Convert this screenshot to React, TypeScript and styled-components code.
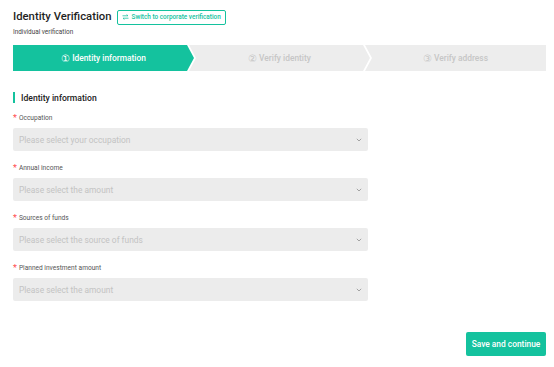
import React from "react";
import styled, { createGlobalStyle } from "styled-components";

const GREEN = "#14c29e";

const GlobalStyle = createGlobalStyle`
  html, body {
    margin: 0;
    padding: 0;
    background: #fff;
    font-family: Roboto, "Noto Sans", Arial, sans-serif;
  }
`;

const Page = styled.div`
  width: 554px;
  height: 367px;
  box-sizing: border-box;
  padding: 9px 8px 0 13px;
  display: flex;
  flex-direction: column;
`;

const TitleRow = styled.div`
  display: flex;
  align-items: center;
  gap: 5px;
  height: 16px;
`;

const Title = styled.h1`
  margin: 0;
  font-size: 11.3px;
  font-weight: 500;
  color: #1f1f1f;
  line-height: 16px;
`;

const SwitchButton = styled.button`
  display: flex;
  align-items: center;
  gap: 3px;
  height: 15px;
  padding: 0 4px;
  border: 1px solid ${GREEN};
  border-radius: 2px;
  background: #fff;
  color: ${GREEN};
  font-family: inherit;
  font-size: 6.4px;
  font-weight: 500;
  white-space: nowrap;
  cursor: pointer;
`;

const Subtitle = styled.div`
  margin-top: 3px;
  font-size: 6.4px;
  color: #444;
  line-height: 9px;
`;

const Stepper = styled.div`
  display: flex;
  height: 26px;
  margin-top: 8px;
`;

const Step = styled.div<{ $active?: boolean; $pos: "first" | "mid" | "last" }>`
  flex: 1;
  display: flex;
  align-items: center;
  justify-content: center;
  margin-left: ${(p) => (p.$pos === "first" ? "0" : "-5px")};
  background: ${(p) => (p.$active ? GREEN : "#ededed")};
  color: ${(p) => (p.$active ? "#fff" : "#c6c6c6")};
  font-size: 8.4px;
  font-weight: 500;
  white-space: nowrap;
  clip-path: ${(p) =>
    p.$pos === "first"
      ? "polygon(0 0, calc(100% - 7px) 0, 100% 50%, calc(100% - 7px) 100%, 0 100%)"
      : p.$pos === "mid"
      ? "polygon(0 0, calc(100% - 7px) 0, 100% 50%, calc(100% - 7px) 100%, 0 100%, 7px 50%)"
      : "polygon(0 0, 100% 0, 100% 100%, 0 100%, 7px 50%)"};
`;

const StepNum = styled.span`
  font-size: 9.5px;
  margin-right: 2px;
`;

const Section = styled.div`
  margin-top: 21px;
  display: flex;
  align-items: center;
  gap: 6px;
  height: 11px;
`;

const SectionBar = styled.span`
  width: 2px;
  height: 11px;
  background: ${GREEN};
`;

const SectionTitle = styled.span`
  font-size: 8.6px;
  font-weight: 500;
  color: #222;
`;

const Form = styled.div`
  margin-top: 9px;
  display: flex;
  flex-direction: column;
  width: 355px;
`;

const Field = styled.div`
  display: flex;
  flex-direction: column;
  margin-bottom: 11px;
`;

const Label = styled.label`
  display: flex;
  align-items: center;
  gap: 2px;
  height: 11px;
  font-size: 6.6px;
  color: #555;
  margin-bottom: 5px;
`;

const Star = styled.span`
  color: #ff4d4f;
  font-size: 9px;
  line-height: 1;
  margin-top: 2px;
`;

const SelectBox = styled.div`
  height: 23px;
  border-radius: 2px;
  background: #ececec;
  display: flex;
  align-items: center;
  justify-content: space-between;
  padding: 0 6px;
  font-size: 8.4px;
  color: #c3c3c3;
`;

const Footer = styled.div`
  display: flex;
  justify-content: flex-end;
  margin-top: 20px;
`;

const SaveButton = styled.button`
  width: 80px;
  height: 24px;
  padding: 0;
  border: none;
  border-radius: 2px;
  background: ${GREEN};
  color: #fff;
  font-family: inherit;
  font-size: 8.4px;
  font-weight: 500;
  white-space: nowrap;
  cursor: pointer;
`;

const Chevron = () => (
  <svg width="6" height="4" viewBox="0 0 6 4" fill="none">
    <path d="M0.8 0.8 L3 3 L5.2 0.8" stroke="#9a9a9a" strokeWidth="0.9" />
  </svg>
);

const SwapIcon = () => (
  <svg width="7" height="6" viewBox="0 0 7 6" fill="none" stroke={GREEN} strokeWidth="0.8">
    <path d="M0.5 1.8 H6 L4.6 0.5" />
    <path d="M6.5 4.2 H1 L2.4 5.5" />
  </svg>
);

const FIELDS = [
  { label: "Occupation", placeholder: "Please select your occupation" },
  { label: "Annual income", placeholder: "Please select the amount" },
  { label: "Sources of funds", placeholder: "Please select the source of funds" },
  { label: "Planned investment amount", placeholder: "Please select the amount" },
];

const STEPS: { n: string; text: string; pos: "first" | "mid" | "last" }[] = [
  { n: "①", text: "Identity information", pos: "first" },
  { n: "②", text: "Verify identity", pos: "mid" },
  { n: "③", text: "Verify address", pos: "last" },
];

export default function App() {
  return (
    <>
      <GlobalStyle />
      <Page>
        <TitleRow>
          <Title>Identity Verification</Title>
          <SwitchButton>
            <SwapIcon />
            Switch to corporate verification
          </SwitchButton>
        </TitleRow>
        <Subtitle>Individual verification</Subtitle>

        <Stepper>
          {STEPS.map((s, i) => (
            <Step key={s.text} $pos={s.pos} $active={i === 0}>
              <StepNum>{s.n}</StepNum>
              {s.text}
            </Step>
          ))}
        </Stepper>

        <Section>
          <SectionBar />
          <SectionTitle>Identity information</SectionTitle>
        </Section>

        <Form>
          {FIELDS.map((f) => (
            <Field key={f.label}>
              <Label>
                <Star>*</Star>
                {f.label}
              </Label>
              <SelectBox>
                {f.placeholder}
                <Chevron />
              </SelectBox>
            </Field>
          ))}
        </Form>

        <Footer>
          <SaveButton>Save and continue</SaveButton>
        </Footer>
      </Page>
    </>
  );
}
